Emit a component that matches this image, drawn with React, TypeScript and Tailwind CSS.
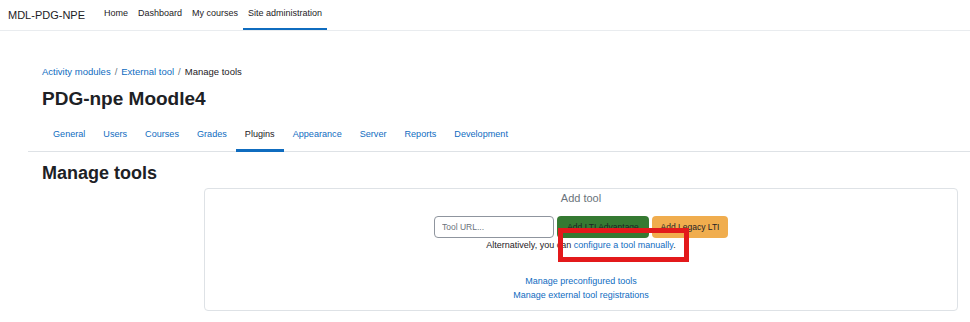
import React from 'react';

const topLinks = ['Home', 'Dashboard', 'My courses', 'Site administration'];
const tabs = ['General', 'Users', 'Courses', 'Grades', 'Plugins', 'Appearance', 'Server', 'Reports', 'Development'];

const App: React.FC = () => {
    return (
        <div className="min-h-[322px] w-[970px] bg-white text-[#1d2125] font-['Liberation_Sans',Arial,sans-serif]">
            {/* top navbar */}
            <header className="flex h-[31px] items-stretch border-b border-[#e9ecef]">
                <div className="flex items-center pl-[8px] text-[11px] text-[#1d2125]">MDL-PDG-NPE</div>
                <nav className="ml-[14px] flex items-stretch">
                    {topLinks.map((l) => (
                        <a
                            key={l}
                            className={`flex items-center border-b-[2px] px-[5px] text-[9px] text-[#1d2125] ${
                                l === 'Site administration' ? 'border-[#0f6cbf]' : 'border-transparent'
                            }`}
                        >
                            {l}
                        </a>
                    ))}
                </nav>
            </header>

            <main className="pl-[28px]">
                <div className="pl-[14px]">
                    <ol className="mt-[34px] flex h-[14px] items-center text-[9.5px]">
                        <li className="text-[#0f6cbf]">Activity modules</li>
                        <li className="px-[4px] text-[#6a737b]">/</li>
                        <li className="text-[#0f6cbf]">External tool</li>
                        <li className="px-[4px] text-[#6a737b]">/</li>
                        <li className="text-[#1d2125]">Manage tools</li>
                    </ol>
                    <h1 className="mt-[8px] h-[24px] text-[19px] font-bold leading-[24px]">PDG-npe Moodle4</h1>
                </div>

                <div className="mt-[6px] flex border-b border-[#dee2e6] pl-[16px]">
                    {tabs.map((t) => (
                        <a
                            key={t}
                            className={`-mb-px flex h-[35px] items-center border-b-[3px] px-[9px] pt-[3px] text-[9.1px] ${
                                t === 'Plugins'
                                    ? 'border-[#0f6cbf] text-[#1d2125]'
                                    : 'border-transparent text-[#0f6cbf]'
                            }`}
                        >
                            {t}
                        </a>
                    ))}
                </div>

                <h2 className="mt-[10px] pl-[14px] text-[18px] font-bold leading-[22px]">Manage tools</h2>

                <section className="relative ml-[176px] mr-[12px] mt-[4px] rounded-[4px] border border-[#dee2e6] px-4 pb-[8px] pt-[2px] text-center">
                    <div className="text-[11px] leading-[14px] text-[#6a737b]">Add tool</div>
                    <div className="mt-[11px] flex justify-center gap-[3px]">
                        <input
                            placeholder="Tool URL..."
                            className="h-[22px] w-[120px] rounded-[4px] border border-[#8f959e] px-[7px] text-[8.5px] placeholder:text-[#6a737b] outline-none"
                        />
                        <button className="h-[22px] w-[92px] rounded-[4px] bg-[#357a32] text-[8.5px] text-[#1d2125]">
                            Add LTI Advantage
                        </button>
                        <button className="h-[22px] w-[76px] rounded-[4px] bg-[#f0ad4e] text-[8.5px] text-[#1d2125]">
                            Add Legacy LTI
                        </button>
                    </div>
                    <p className="mt-[1px] text-[9px] leading-[12px]">
                        Alternatively, you can <a className="text-[#0f6cbf]">configure a tool manually</a>.
                    </p>
                    <div className="mt-[23px] flex flex-col items-center text-[9px] leading-[14px] text-[#0f6cbf]">
                        <a>Manage preconfigured tools</a>
                        <a>Manage external tool registrations</a>
                    </div>

                    {/* red annotation box */}
                    <div className="absolute left-[353px] top-[39px] h-[34px] w-[131px] border-[5px] border-[#e3191b]" />
                </section>
            </main>
        </div>
    );
};

export default App;
